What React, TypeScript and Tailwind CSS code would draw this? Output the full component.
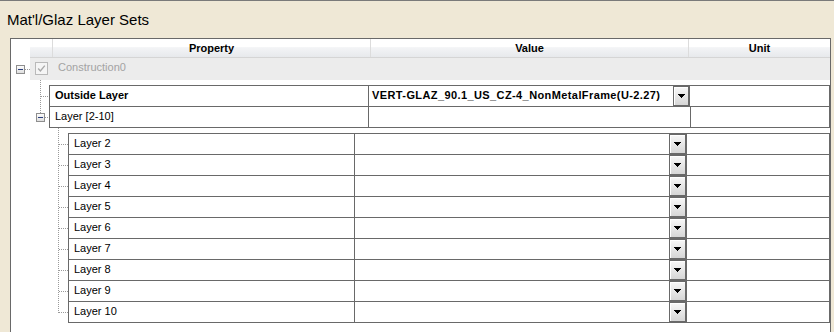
import React from "react";

const ExpandBox = ({ x, y }: { x: number; y: number }) => (
  <g>
    <rect x={x} y={y} width={8} height={8} fill="url(#eb)" stroke="#8e8e8e" strokeWidth={1} shapeRendering="crispEdges" />
    <line x1={x + 1.5} y1={y + 4} x2={x + 6.5} y2={y + 4} stroke="#2b3f7d" strokeWidth={1} shapeRendering="crispEdges" />
  </g>
);

const Defs = () => (
  <defs>
    <linearGradient id="eb" x1="0" y1="0" x2="0" y2="1">
      <stop offset="0" stopColor="#ffffff" />
      <stop offset="1" stopColor="#dcdcdc" />
    </linearGradient>
  </defs>
);

const Dot = ({ x1, y1, x2, y2 }: { x1: number; y1: number; x2: number; y2: number }) => (
  <line x1={x1} y1={y1} x2={x2} y2={y2} stroke="#9a9a9a" strokeWidth={1} strokeDasharray="1 1" shapeRendering="crispEdges" />
);

const DropButton = ({ w }: { w: string }) => (
  <div
    className={`${w} h-full border border-[#696969] bg-[linear-gradient(to_bottom,#f8f8f8,#d6d6d6)] shadow-[inset_1px_1px_0_#ffffff] flex items-center justify-center`}
  >
    <svg width="7" height="4" viewBox="0 0 7 4">
      <polygon points="0,0 7,0 3.5,4" fill="#000" shapeRendering="crispEdges" />
    </svg>
  </div>
);

const layers = ["Layer 2", "Layer 3", "Layer 4", "Layer 5", "Layer 6", "Layer 7", "Layer 8", "Layer 9", "Layer 10"];

export default function App() {
  return (
    <div className="w-[834px] h-[332px] overflow-hidden bg-[#efe8d6] border-t border-[#7a7a7a] font-['Liberation_Sans',Arial,sans-serif] text-[11px] text-black">
      <div className="h-[37px] pl-[7px] pt-[10px] text-[15px] leading-[17px]">Mat'l/Glaz Layer Sets</div>
      <div className="ml-[10px] w-[821px] h-[320px] border border-[#696969] bg-white">
        {/* header */}
        <div className="flex h-[19px]">
          <div className="w-[19px]" />
          <div className="flex flex-1 border-b border-[#d5d5d5] bg-[linear-gradient(to_bottom,#ffffff_0%,#ffffff_42%,#f3f4f6_48%,#e7e9ec_100%)] font-bold">
            <div className="w-[23px] border-r border-[#dcdcdc]" />
            <div className="w-[318px] border-r border-[#dcdcdc] text-center pt-[1px] leading-[17px]">Property</div>
            <div className="w-[318px] border-r border-[#dcdcdc] text-center pt-[1px] leading-[17px]">Value</div>
            <div className="flex-1 text-center pt-[1px] leading-[17px]">Unit</div>
          </div>
        </div>
        {/* construction row */}
        <div className="flex h-[22px]">
          <svg width="19" height="22" className="shrink-0">
            <Defs />
            <ExpandBox x={5.5} y={7.5} />
            <Dot x1={14} y1={11.5} x2={19} y2={11.5} />
          </svg>
          <div className="flex flex-1 bg-[#ececec]">
            <div className="pl-[5px] pt-[4px]">
              <svg width="13" height="13">
                <rect x="0.5" y="0.5" width="12" height="12" fill="#f5f5f5" stroke="#b9b9b9" shapeRendering="crispEdges" />
                <path d="M3.2 6.6 L5.4 8.9 L9.8 3.6" fill="none" stroke="#a9a9a9" strokeWidth="1.4" />
              </svg>
            </div>
            <div className="ml-[10px] leading-[18px] text-[#a3a3a3]">Construction0</div>
          </div>
        </div>
        {/* section A */}
        <div className="flex h-[48px]">
          <svg width="38" height="48" className="shrink-0">
            <Defs />
            <Dot x1={29.5} y1={0} x2={29.5} y2={33} />
            <Dot x1={30} y1={16.5} x2={38} y2={16.5} />
            <ExpandBox x={25.5} y={33.5} />
            <Dot x1={34} y1={37.5} x2={38} y2={37.5} />
          </svg>
          <div className="mt-[5px] w-[781px] h-[43px] border border-[#696969] flex flex-col">
            <div className="flex h-[21px] border-b border-[#696969]">
              <div className="w-[319px] border-r border-[#696969] pl-[5px] font-bold leading-[18px]">Outside Layer</div>
              <div className="w-[320px] flex">
                <div className="w-[304px] pl-[3px] font-bold leading-[18px] tracking-[0.4px] whitespace-nowrap overflow-hidden">
                  VERT-GLAZ_90.1_US_CZ-4_NonMetalFrame(U-2.27)
                </div>
                <DropButton w="w-[16px]" />
              </div>
              <div className="flex-1 border-l border-[#696969]" />
            </div>
            <div className="flex h-[20px]">
              <div className="w-[319px] border-r border-[#696969] pl-[5px] leading-[18px] text-black">Layer [2-10]</div>
              <div className="w-[321px]" />
              <div className="flex-1 border-l border-[#696969]" />
            </div>
          </div>
        </div>
        {/* section B */}
        <div className="flex">
          <svg width="57" height="200" className="shrink-0">
            <Dot x1={47.5} y1={0} x2={47.5} y2={185} />
            {layers.map((_, i) => (
              <Dot key={i} x1={48} y1={16.5 + 21 * i} x2={57} y2={16.5 + 21 * i} />
            ))}
          </svg>
          <div className="mt-[5px] w-[762px] self-start border-t border-x border-[#696969]">
            {layers.map((l) => (
              <div key={l} className="flex h-[21px] border-b border-[#696969]">
                <div className="w-[286px] border-r border-[#696969] pl-[5px] leading-[18px]">{l}</div>
                <div className="w-[314px]" />
                <DropButton w="w-[17px]" />
                <div className="flex-1 border-l border-[#696969]" />
              </div>
            ))}
          </div>
        </div>
      </div>
    </div>
  );
}
